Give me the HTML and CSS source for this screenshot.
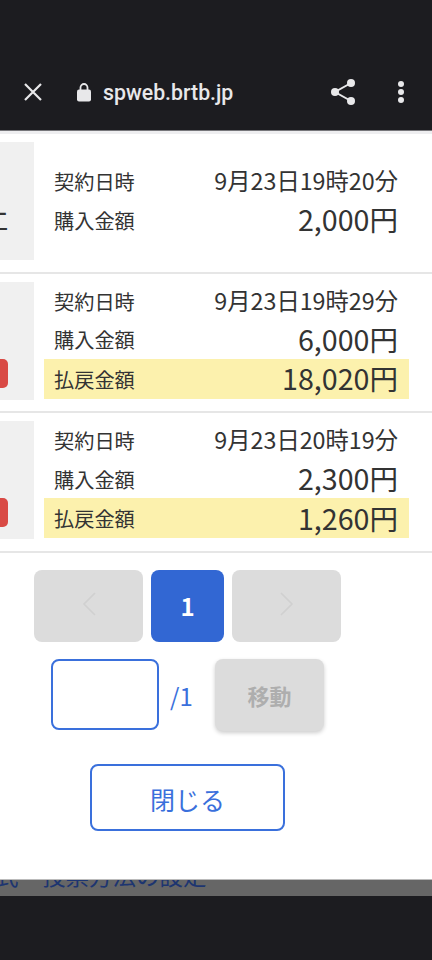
FILE: index.html
```html
<!DOCTYPE html>
<html lang="ja">
<head>
  <meta charset="UTF-8" />
  <meta name="viewport" content="width=device-width, initial-scale=1.0" />
  <title>spweb.brtb.jp</title>
  <link rel="stylesheet" href="styles.css">
</head>
<body>
  <header class="browser-bar">
    <svg class="icon-close" width="20" height="20" viewBox="0 0 20 20"><path d="M2 2L18 18M18 2L2 18" stroke="#e8e8ea" stroke-width="2.2" fill="none"/></svg>
    <svg class="icon-lock" width="16" height="20" viewBox="0 0 16 20"><path d="M4.5 8V5.5a3.5 3.5 0 0 1 7 0V8" stroke="#e8e8ea" stroke-width="1.8" fill="none"/><rect x="1" y="7.5" width="14" height="12" rx="2" fill="#e8e8ea"/></svg>
    <span class="url">spweb.brtb.jp</span>
    <svg class="icon-share" width="26" height="28" viewBox="0 0 26 28"><path d="M21 5L5 14L21 23" stroke="#e8e8ea" stroke-width="2" fill="none"/><circle cx="21" cy="5" r="4" fill="#e8e8ea"/><circle cx="5" cy="14" r="4" fill="#e8e8ea"/><circle cx="21" cy="23" r="4" fill="#e8e8ea"/></svg>
    <svg class="icon-more" width="8" height="22" viewBox="0 0 8 22"><circle cx="4" cy="3" r="3" fill="#e8e8ea"/><circle cx="4" cy="11" r="3" fill="#e8e8ea"/><circle cx="4" cy="19" r="3" fill="#e8e8ea"/></svg>
  </header>

  <main class="modal">
    <section class="ticket">
      <div class="thumb"><span class="thumb-text">工</span></div>
      <div class="info">
        <div class="line"><span class="label">契約日時</span><span class="date">9月23日19時20分</span></div>
        <div class="line"><span class="label">購入金額</span><span class="amount">2,000円</span></div>
      </div>
    </section>
    <section class="ticket">
      <div class="thumb"><span class="badge"></span></div>
      <div class="info">
        <div class="line"><span class="label">契約日時</span><span class="date">9月23日19時29分</span></div>
        <div class="line"><span class="label">購入金額</span><span class="amount">6,000円</span></div>
        <div class="line refund"><span class="label">払戻金額</span><span class="amount">18,020円</span></div>
      </div>
    </section>
    <section class="ticket">
      <div class="thumb"><span class="badge"></span></div>
      <div class="info">
        <div class="line"><span class="label">契約日時</span><span class="date">9月23日20時19分</span></div>
        <div class="line"><span class="label">購入金額</span><span class="amount">2,300円</span></div>
        <div class="line refund"><span class="label">払戻金額</span><span class="amount">1,260円</span></div>
      </div>
    </section>

    <div class="pager">
      <button class="page-btn arrow"><svg width="14" height="24" viewBox="0 0 14 24"><path d="M13 1L2 12L13 23" stroke="#d0d0d0" stroke-width="1.6" fill="none"/></svg></button>
      <button class="page-btn current">1</button>
      <button class="page-btn arrow"><svg width="14" height="24" viewBox="0 0 14 24"><path d="M1 1L12 12L1 23" stroke="#d0d0d0" stroke-width="1.6" fill="none"/></svg></button>
    </div>
    <div class="jump">
      <input type="text" class="jump-input" />
      <span class="jump-total">/1</span>
      <button class="jump-btn">移動</button>
    </div>
    <button class="close-btn">閉じる</button>
  </main>

  <div class="behind"><span class="behind-text">式・投票方法の設定</span></div>
  <div class="nav-bar"></div>
</body>
</html>
```

FILE: styles.css
```css
* {
  box-sizing: border-box;
}
body {
  margin: 0;
  height: 960px;
  overflow: hidden;
  background: #1c1c20;
  font-family: "Noto Sans CJK JP", "Noto Sans", sans-serif;
  color: #333;
}
.browser-bar {
  height: 131px;
  padding: 53px 27px 0 23px;
  display: flex;
  align-items: center;
  background: #1c1c20;
  border-bottom: 1px solid #77777b;
}
.icon-lock {
  margin-left: 33px;
}
.url {
  margin-left: 11px;
  margin-top: 2px;
  flex: 1;
  font-family: Roboto, sans-serif;
  font-size: 21.3px;
  font-weight: 500;
  color: #e8e8ea;
}
.icon-more {
  margin-left: 41px;
}
.modal {
  height: 747.5px;
  background: #fff;
  border-top: 3px solid #eeeef0;
}
.ticket {
  display: flex;
  align-items: center;
  height: 139.5px;
  padding: 8px 0 11.5px;
  border-bottom: 2px solid #e6e6e6;
}
.thumb {
  width: 34px;
  height: 118px;
  flex-shrink: 0;
  background: #f0f0f0;
  display: flex;
  flex-direction: column;
  align-items: flex-end;
  justify-content: flex-end;
  overflow: hidden;
}
.thumb-text {
  margin: 0 26px 30px 0;
  font-size: 22px;
  line-height: 22px;
  font-weight: 500;
  flex-shrink: 0;
}
.badge {
  width: 34px;
  height: 29px;
  flex-shrink: 0;
  margin: 0 26px 12px 0;
  border-radius: 5px;
  background: #d94a45;
}
.info {
  width: 365px;
  margin-top: -1px;
  margin-left: 10px;
}
.line {
  height: 38.5px;
  padding: 0 11px 0 10px;
  display: flex;
  align-items: center;
  justify-content: space-between;
}
.label {
  font-size: 20.2px;
  margin-top: 1px;
}
.date {
  font-size: 23.3px;
  margin-top: -2px;
}
.amount {
  font-size: 28.6px;
  margin-top: -2px;
}
.refund {
  height: 40px;
  background: #fcf1ad;
}
.pager {
  margin-top: 17px;
  margin-left: 34px;
  display: flex;
  gap: 8px;
}
.page-btn {
  height: 72.5px;
  border: none;
  border-radius: 8px;
  padding: 0;
  font-family: inherit;
}
.arrow {
  width: 109px;
  background: #dcdcdc;
}
.current {
  width: 73px;
  background: #3267d3;
  color: #fff;
  font-size: 24px;
  font-weight: 700;
}
.jump {
  margin-top: 17px;
  margin-left: 51px;
  display: flex;
  align-items: flex-start;
}
.jump-input {
  width: 108px;
  height: 71px;
  border: 2px solid #3a70dc;
  border-radius: 8px;
  background: #fff;
}
.jump-total {
  margin: 19px 0 0 11px;
  width: 45px;
  font-size: 24px;
  line-height: 36px;
  color: #3a70dc;
}
.jump-btn {
  width: 109px;
  height: 72px;
  border: none;
  border-radius: 8px;
  background: #dcdcdc;
  color: #aeaeae;
  font-family: inherit;
  font-size: 22px;
  font-weight: 700;
  box-shadow: 0 2px 4px rgba(0, 0, 0, 0.2);
}
.close-btn {
  display: block;
  width: 195px;
  height: 67px;
  margin: 33px 0 0 90px;
  padding: 2px 0 0;
  border: 2px solid #3a70dc;
  border-radius: 8px;
  background: #fff;
  color: #3a70dc;
  font-family: inherit;
  font-size: 25px;
}
.behind {
  height: 17.5px;
  background: #666;
  border-top: 1px solid #bbb;
  display: flex;
  align-items: flex-end;
  overflow: hidden;
}
.behind-text {
  margin-left: -5px;
  margin-bottom: 4px;
  flex-shrink: 0;
  font-size: 23.5px;
  line-height: 34px;
  color: #1d3570;
}
.nav-bar {
  height: 64px;
  background: #1c1c20;
}
```
